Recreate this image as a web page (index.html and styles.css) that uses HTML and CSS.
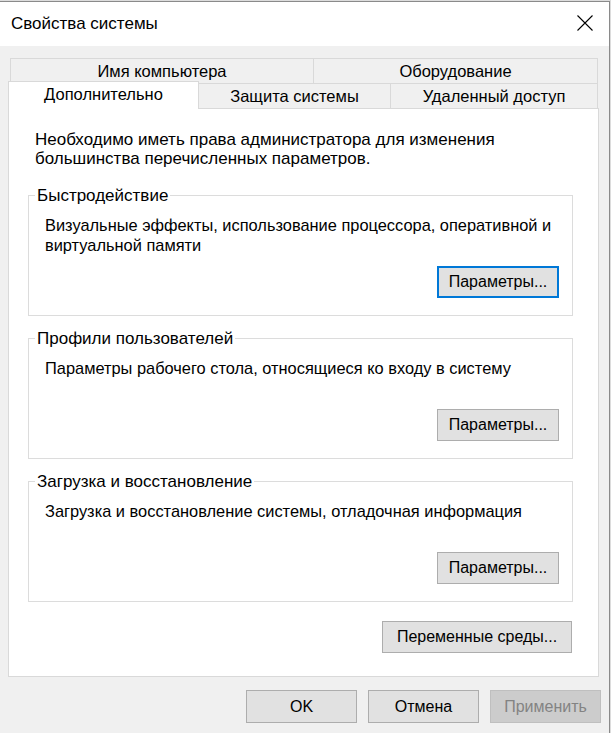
FILE: index.html
```html
<!DOCTYPE html>
<html lang="ru">
<head>
    <meta charset="UTF-8">
    <title>Свойства системы</title>
    <link rel="stylesheet" href="styles.css">
</head>
<body>

<div class="window">
    <div class="titlebar">
        <span class="title">Свойства системы</span>
        <svg class="close" width="16" height="16" viewBox="0 0 16 16">
            <path d="M0.5 0.5 L15.5 15.5 M15.5 0.5 L0.5 15.5" stroke="#000" stroke-width="1.1" fill="none"/>
        </svg>
    </div>

    <div class="content">
        <div class="tab-row tab-row-top">
            <div class="tab tab-name">Имя компьютера</div>
            <div class="tab tab-hw">Оборудование</div>
        </div>
        <div class="tab-row tab-row-bottom">
            <div class="tab tab-active">Дополнительно</div>
            <div class="tab tab-protect">Защита системы</div>
            <div class="tab tab-remote">Удаленный доступ</div>
        </div>

        <div class="panel">
            <p class="intro">Необходимо иметь права администратора для изменения<br>большинства перечисленных параметров.</p>

            <fieldset class="group group-first">
                <legend>Быстродействие</legend>
                <p class="group-text">Визуальные эффекты, использование процессора, оперативной и<br>виртуальной памяти</p>
                <div class="group-actions">
                    <button class="btn btn-params btn-focus">Параметры...</button>
                </div>
            </fieldset>

            <fieldset class="group">
                <legend>Профили пользователей</legend>
                <p class="group-text">Параметры рабочего стола, относящиеся ко входу в систему</p>
                <div class="group-actions">
                    <button class="btn btn-params">Параметры...</button>
                </div>
            </fieldset>

            <fieldset class="group">
                <legend>Загрузка и восстановление</legend>
                <p class="group-text">Загрузка и восстановление системы, отладочная информация</p>
                <div class="group-actions">
                    <button class="btn btn-params">Параметры...</button>
                </div>
            </fieldset>

            <div class="panel-actions">
                <button class="btn btn-env">Переменные среды...</button>
            </div>
        </div>

        <div class="dialog-actions">
            <button class="btn btn-dialog">OK</button>
            <button class="btn btn-dialog">Отмена</button>
            <button class="btn btn-dialog" disabled>Применить</button>
        </div>
    </div>
</div>

</body>
</html>
```

FILE: styles.css
```css
* {
    box-sizing: border-box;
}

body {
    margin: 0;
    background-color: #dcdcdc;
    font-family: "Liberation Sans", Arial, sans-serif;
    font-size: 17px;
    color: #000;
}

.window {
    width: 610px;
    height: 740px;
    margin-top: 1px;
    background-color: #f0f0f0;
    border-top: 1px solid #8a8a8a;
    border-right: 1px solid #8a8a8a;
}

.titlebar {
    height: 44px;
    background-color: #fff;
    display: flex;
    align-items: center;
    justify-content: space-between;
    padding: 0 16px 0 11px;
}

.title {
    font-size: 17px;
}

.close {
    display: block;
    margin-top: -2px;
}

.content {
    padding-top: 12px;
}

/* tabs */
.tab-row {
    display: flex;
    align-items: flex-start;
}

.tab-row-top {
    margin-left: 10px;
}

.tab-row-bottom {
    margin-left: 8px;
}

.tab {
    height: 25px;
    display: flex;
    align-items: center;
    justify-content: center;
    background-color: #f0f0f0;
    border: 1px solid #d9d9d9;
    border-bottom: none;
    font-size: 16.5px;
}

.tab-name {
    width: 304px;
}

.tab-hw {
    width: 285px;
    margin-left: -1px;
}

.tab-active {
    position: relative;
    z-index: 1;
    width: 191px;
    height: 28px;
    margin-top: -2px;
    margin-bottom: -1px;
    background-color: #fff;
    padding-bottom: 3px;
}

.tab-protect {
    width: 193px;
    margin-left: -1px;
}

.tab-remote {
    width: 208px;
    margin-left: -1px;
}

/* panel */
.panel {
    width: 591px;
    margin-left: 8px;
    background-color: #fff;
    border: 1px solid #d9d9d9;
    padding: 21px 25px 23px 19px;
}

.intro {
    margin: 0 0 0 7px;
    line-height: 19px;
}

.group {
    margin: 13px 0 0 0;
    min-width: 0;
    border: 1px solid #dcdcdc;
    padding: 10px 13px 17px 6px;
}

.group-first {
    margin-top: 18px;
}

.group legend {
    padding: 0 2px;
    line-height: 19px;
}

.group-text {
    margin: 0 0 0 10px;
    min-height: 40px;
    line-height: 20px;
    font-size: 16.4px;
    white-space: nowrap;
}

.group-actions {
    display: flex;
    justify-content: flex-end;
    margin-top: 11px;
}

.panel-actions {
    display: flex;
    justify-content: flex-end;
    margin: 19px 1px 0 0;
}

/* buttons */
.btn {
    font-family: "Liberation Sans", Arial, sans-serif;
    font-size: 16px;
    color: #000;
    background-color: #e1e1e1;
    border: 1px solid #adadad;
    padding: 0;
}

.btn-params {
    width: 122px;
    height: 32px;
}

.btn-focus {
    border: 2px solid #0078d7;
}

.btn-env {
    width: 190px;
    height: 32px;
}

.dialog-actions {
    display: flex;
    justify-content: flex-end;
    gap: 11px;
    margin-top: 13px;
    padding-right: 8px;
}

.btn-dialog {
    width: 111px;
    height: 33px;
}

.btn-dialog:disabled {
    background-color: #cccccc;
    border-color: #bfbfbf;
    color: #838383;
}
```
